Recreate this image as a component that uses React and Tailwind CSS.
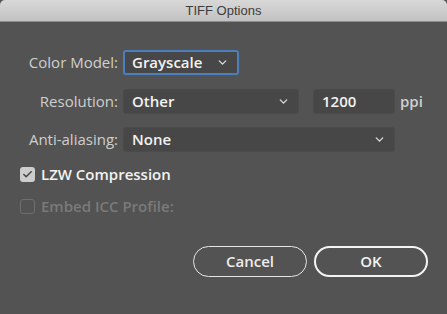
import { ChevronDown, Check } from 'lucide-react';

const font = { fontFamily: '"Open Sans", "Liberation Sans", sans-serif' };

function Select({ value, active, className }) {
  return (
    <div
      className={`flex h-[25px] items-center justify-between rounded-[3px] bg-[#474747] pr-[8px] ${
        active ? 'border-2 border-[#4c7fbd] pl-[7px]' : 'border border-[#4b4b4b] pl-[8px]'
      } ${className}`}
    >
      <span className="text-[15px] font-semibold leading-none text-[#f2f2f2]">{value}</span>
      <ChevronDown className="h-[13px] w-[13px] text-[#dcdcdc]" strokeWidth={2.5} />
    </div>
  );
}

function Label({ children }) {
  return (
    <span className="w-[123px] shrink-0 pr-[5px] text-right text-[15px] text-[#cfcfcf]">{children}</span>
  );
}

export default function App() {
  return (
    <div className="h-[314px] w-[447px] overflow-hidden bg-[#535353]" style={font}>
      <div
        className="flex h-[22px] items-center justify-center rounded-t-[5px] border-b border-[#8a8a8a] bg-gradient-to-b from-[#d8d8d8] to-[#c2c2c2] text-[13px] text-[#3c3c3c]"
        style={{ fontFamily: '"Liberation Sans", sans-serif' }}
      >
        TIFF Options
      </div>

      <div className="flex flex-col pt-[28px]">
        <div className="flex h-[25px] items-center">
          <Label>Color Model:</Label>
          <Select value="Grayscale" active className="w-[116px]" />
        </div>

        <div className="mt-[14px] flex h-[25px] items-center">
          <Label>Resolution:</Label>
          <Select value="Other" className="w-[176px]" />
          <div className="ml-[14px] flex h-[25px] w-[82px] items-center rounded-[3px] border border-[#4b4b4b] bg-[#474747] pl-[8px] text-[15px] font-semibold text-[#f2f2f2]">
            1200
          </div>
          <span className="ml-[5px] text-[15px] font-semibold text-[#cfcfcf]">ppi</span>
        </div>

        <div className="mt-[13px] flex h-[25px] items-center">
          <Label>Anti-aliasing:</Label>
          <Select value="None" className="w-[272px]" />
        </div>
      </div>

      <div className="mt-[15px] flex flex-col gap-[17px] pl-[20px]">
        <div className="flex h-[15px] items-center gap-[6px]">
          <div className="flex h-[15px] w-[15px] items-center justify-center rounded-[3px] bg-[#cdcdcd]">
            <Check className="h-[11px] w-[11px] text-[#4a4a4a]" strokeWidth={3.5} />
          </div>
          <span className="text-[15px] font-semibold text-[#f2f2f2]">LZW Compression</span>
        </div>
        <div className="flex h-[15px] items-center gap-[6px]">
          <div className="h-[15px] w-[15px] rounded-[3px] border border-[#6e6e6e]" />
          <span className="text-[15px] font-semibold text-[#7a7a7a]">Embed ICC Profile:</span>
        </div>
      </div>

      <div className="mt-[32px] flex justify-end gap-[7px] pr-[19px]">
        <button className="flex h-[31px] w-[114px] items-center justify-center rounded-full border-[1.5px] border-[#e6e6e6] text-[15px] font-semibold text-[#ededed]">
          Cancel
        </button>
        <button className="flex h-[31px] w-[114px] items-center justify-center rounded-full border-[2.5px] border-[#f4f4f4] text-[15px] font-semibold text-[#f4f4f4]">
          OK
        </button>
      </div>
    </div>
  );
}
